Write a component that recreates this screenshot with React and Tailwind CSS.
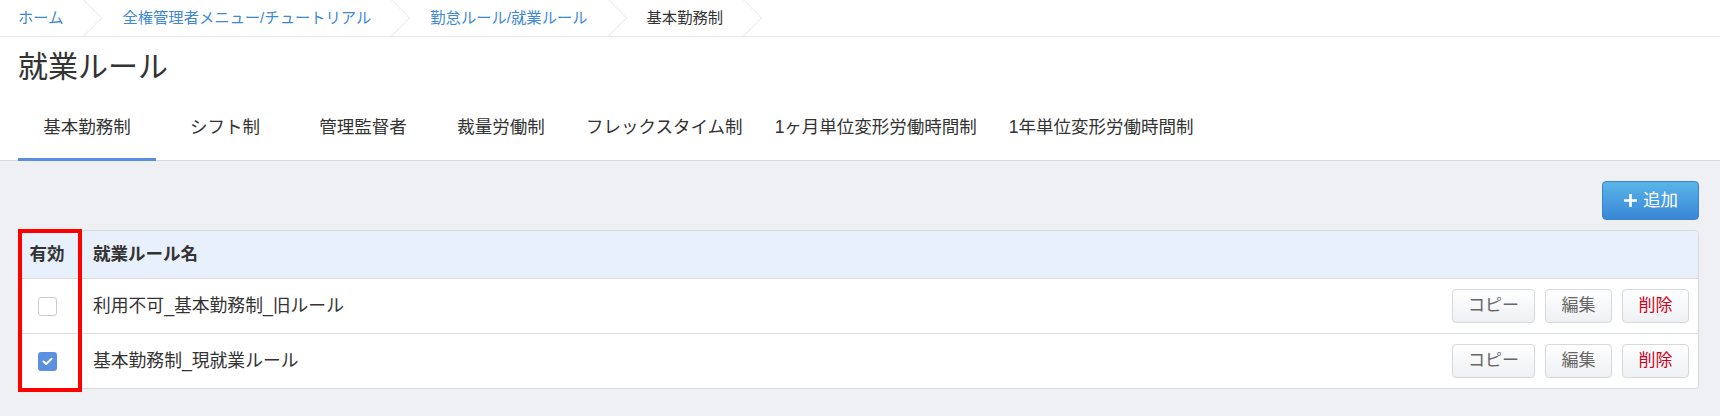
import React from 'react'

const font = { fontFamily: '"Liberation Sans", "Noto Sans CJK JP", "Noto Sans", sans-serif' }

function Chevron() {
  return (
    <svg width="19" height="36" viewBox="0 0 19 36" fill="none" className="mx-[20px] shrink-0">
      <path d="M0.5 0 L18.5 18 L0.5 36" stroke="#e4e6ea" strokeWidth="1" />
    </svg>
  )
}

function Breadcrumb() {
  const items = ['ホーム', '全権管理者メニュー/チュートリアル', '勤怠ルール/就業ルール']
  return (
    <nav className="h-[37px] border-b border-[#e6e8ec] bg-white flex items-center pl-[18px] text-[15.3px]">
      {items.map((t) => (
        <React.Fragment key={t}>
          <a className="text-[#3f88d6] whitespace-nowrap">{t}</a>
          <Chevron />
        </React.Fragment>
      ))}
      <span className="text-[#333]">基本勤務制</span>
      <Chevron />
    </nav>
  )
}

function Tabs() {
  const tabs = ['基本勤務制', 'シフト制', '管理監督者', '裁量労働制', 'フレックスタイム制', '1ヶ月単位変形労働時間制', '1年単位変形労働時間制']
  return (
    <div className="mt-[11px] flex border-b border-[#d6d9df] px-[18px]">
      {tabs.map((t, i) => (
        <div
          key={t}
          className={
            'min-w-[138px] px-4 h-[65px] -mb-px flex items-center justify-center text-[17.5px] text-[#333] whitespace-nowrap border-b-[3px] ' +
            (i === 0 ? 'border-[#5a8ee0]' : 'border-transparent')
          }
        >
          {t}
        </div>
      ))}
    </div>
  )
}

function Checkbox({ checked }) {
  if (checked) {
    return (
      <div className="w-[19px] h-[19px] rounded-[3px] bg-[#5b8fe0] flex items-center justify-center">
        <svg width="11" height="9" viewBox="0 0 11 9" fill="none">
          <path d="M1.5 4.5 L4.2 7 L9.5 1.8" stroke="white" strokeWidth="2" strokeLinecap="round" strokeLinejoin="round" />
        </svg>
      </div>
    )
  }
  return <div className="w-[19px] h-[19px] rounded-[3px] border border-[#c9ccd1] bg-white" />
}

function RowButton({ children, w, danger }) {
  return (
    <button
      className={
        'h-[34px] rounded-[4px] border border-[#d5d8dd] bg-linear-to-b from-white to-[#eef0f3] text-[17px] flex items-center justify-center ' +
        w + ' ' + (danger ? 'text-[#d0021b]' : 'text-[#666]')
      }
    >
      {children}
    </button>
  )
}

function Row({ name, checked }) {
  return (
    <div className="h-[55px] border-t border-[#d9dce1] flex items-center">
      <div className="w-[56px] flex justify-center">
        <Checkbox checked={checked} />
      </div>
      <div className="pl-[18px] text-[17.8px] text-[#333]">{name}</div>
      <div className="ml-auto flex gap-[10px] pr-[9px]">
        <RowButton w="w-[83px]">コピー</RowButton>
        <RowButton w="w-[67px]">編集</RowButton>
        <RowButton w="w-[67px]" danger>削除</RowButton>
      </div>
    </div>
  )
}

export default function App() {
  return (
    <div className="min-h-[416px] bg-[#eff0f4]" style={font}>
      <div className="bg-white">
        <Breadcrumb />
        <h1 className="pt-[12px] pl-[18px] text-[30px] leading-[36px] text-[#333] font-normal">就業ルール</h1>
        <Tabs />
      </div>

      <main className="pl-[18px] pr-[21px] pt-[20px] pb-[26px]">
        <div className="flex justify-end mb-[10px]">
          <button className="w-[97px] h-[39px] rounded-[4px] border border-[#3a84cf] bg-linear-to-b from-[#5ab5e8] to-[#3a86d6] text-white text-[17.5px] flex items-center justify-center gap-[5px]">
            <svg width="15" height="15" viewBox="0 0 15 15" fill="none">
              <path d="M7.5 1 V14 M1 7.5 H14" stroke="white" strokeWidth="2.6" />
            </svg>
            追加
          </button>
        </div>

        <div className="relative rounded-[4px] border border-[#d6d9de] bg-white">
          <div className="h-[47px] bg-[#e8f0fc] rounded-t-[4px] flex items-center text-[17.5px] font-bold text-[#333]">
            <div className="w-[56px] text-center">有効</div>
            <div className="pl-[18px]">就業ルール名</div>
          </div>
          <Row name="利用不可_基本勤務制_旧ルール" checked={false} />
          <Row name="基本勤務制_現就業ルール" checked />
          <div className="absolute left-[-1px] top-[-2px] w-[64px] h-[163px] border-4 border-[#ff0000]" />
        </div>
      </main>
    </div>
  )
}
